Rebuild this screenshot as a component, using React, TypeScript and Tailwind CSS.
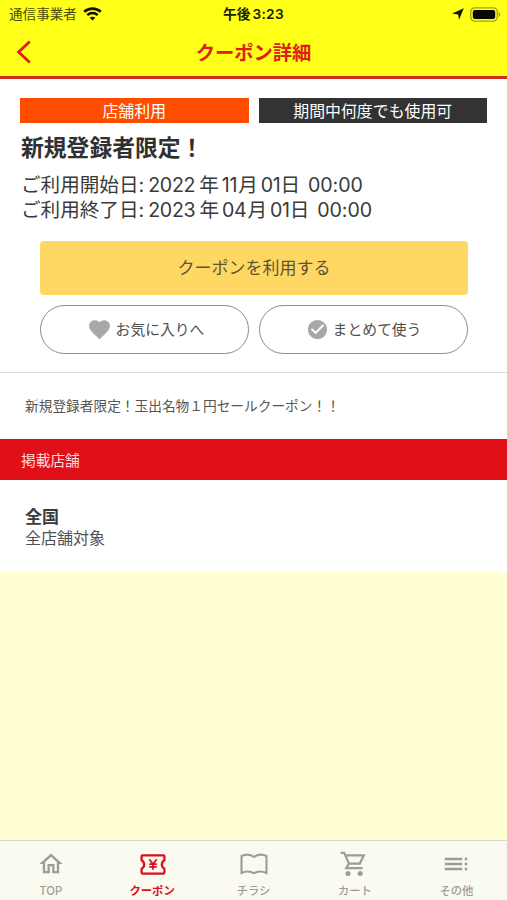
import type { ReactNode } from "react";
import {
  MdCheckCircle,
  MdFavorite,
  MdOutlineHome,
  MdToc,
} from "react-icons/md";

type DateRowProps = {
  label: string;
  year: string;
  month: string;
  day: string;
  time: string;
};

const DateRow = ({ label, year, month, day, time }: DateRowProps) => {
  return (
    <p className="flex h-[25px] items-center whitespace-pre text-[19.6px] leading-[25px] text-[#3a3a3a]">
      <span>{label}:</span>
      <span className="ml-1 tracking-[-0.3px]">{year}</span>
      <span className="ml-[4px] mr-[3px]">年</span>
      <span className="tracking-[-0.3px]">{month}</span>
      <span className="ml-px">月</span>
      <span className="ml-[3px] tracking-[-0.3px]">{day}</span>
      <span>日</span>
      <span className="ml-[8px] tracking-[-0.1px]">{time}</span>
    </p>
  );
};

type TabProps = {
  label: string;
  icon: ReactNode;
  active?: boolean;
};

const Tab = ({ label, icon, active }: TabProps) => {
  return (
    <div
      className={`flex flex-1 flex-col items-center ${
        active ? "font-bold text-[#d8101c]" : "font-medium text-[#9d9d96]"
      }`}
    >
      <div className="mt-[9px] flex h-7 items-center">{icon}</div>
      <span className="mt-1 text-[11.3px] leading-[18px]">{label}</span>
    </div>
  );
};

const TicketIcon = () => (
  <svg className="ml-px" width="26" height="21" viewBox="0 0 26 21" fill="none" stroke="currentColor">
    <path
      d="M2.6 1.4H23.4Q24.4 1.4 24.4 2.4V6.2C21 8.2 21 12.8 24.4 14.8V18.6Q24.4 19.6 23.4 19.6H2.6Q1.6 19.6 1.6 18.6V14.8C5 12.8 5 8.2 1.6 6.2V2.4Q1.6 1.4 2.6 1.4Z"
      strokeWidth="2.3"
    />
    <path d="M9.3 5.2L13 10.1L16.7 5.2M13 10.1V15.8M9.2 10.1H16.8M9.2 12.9H16.8" strokeWidth="1.8" />
  </svg>
);

const BookIcon = () => (
  <svg width="28" height="22" viewBox="0 0 28 22" fill="none" stroke="currentColor" strokeWidth="2.1">
    <path d="M14 4C10.5 1.2 5.5 1.2 1.5 3V20C5.5 18.2 10.5 18.2 14 20.2C17.5 18.2 22.5 18.2 26.5 20V3C22.5 1.2 17.5 1.2 14 4Z" />
  </svg>
);

const CartIcon = () => (
  <svg className="mr-[3px]" width="26" height="26" viewBox="0 0 26 26" fill="none" stroke="currentColor" strokeWidth="2.2">
    <path d="M0.6 1.8H4.2L9 12.6H19.8L23.8 4.3H5.3M8.8 12.6L6.3 17.2H22.6" />
    <circle cx="8" cy="22.6" r="2.5" fill="currentColor" stroke="none" />
    <circle cx="20.2" cy="22.6" r="2.5" fill="currentColor" stroke="none" />
  </svg>
);

const StatusBar = () => (
  <div className="grid h-7 grid-cols-3 items-center">
    <div className="flex items-center pl-[9px] text-[#4b4b0a]">
      <span className="text-[13.6px]">通信事業者</span>
      <svg className="ml-1.5" width="19" height="14" viewBox="0 0 19 14" fill="none" stroke="#111100">
        <path d="M1.2 4.8C5.8 0.5 13.2 0.5 17.8 4.8" strokeWidth="2.6" />
        <path d="M4.3 8.1C7.3 5.4 11.7 5.4 14.7 8.1" strokeWidth="2.5" />
        <path d="M9.5 13.6L6.7 10.7C8.3 9.3 10.7 9.3 12.3 10.7Z" fill="#111100" stroke="none" />
      </svg>
    </div>
    <p className="text-center text-[13.7px] font-bold text-[#202000]">
      午後<span className="ml-0.5 font-semibold tracking-[0.3px]">3:23</span>
    </p>
    <div className="flex items-center justify-end pr-[6px]">
      <svg width="12" height="12" viewBox="0 0 12 12" fill="#111100">
        <path d="M11.8 0.2L7 11.8L6.2 6.4L0.2 5.6Z" />
      </svg>
      <svg className="ml-[6px]" width="31" height="15" viewBox="0 0 31 15">
        <rect x="0.7" y="0.9" width="26.6" height="13.2" rx="4" fill="none" stroke="#a2a217" strokeWidth="1.3" />
        <rect x="2.8" y="2.9" width="22.4" height="9.2" rx="2" fill="#080800" />
        <path d="M28.6 5V10Q30.4 9.2 30.4 7.5Q30.4 5.8 28.6 5Z" fill="#a2a217" />
      </svg>
    </div>
  </div>
);

export default function App() {
  return (
    <div className="flex h-[900px] w-[507px] flex-col overflow-hidden bg-[#ffffd2] font-['Inter','Noto_Sans_CJK_JP',sans-serif]">
      <header className="h-[79px] shrink-0 border-b-[3px] border-[#d22a1b] bg-[#ffff17]">
        <StatusBar />
        <div className="grid h-12 grid-cols-[60px_1fr_60px] items-center">
          <svg className="ml-4" width="16" height="24" viewBox="0 0 16 24" fill="none" stroke="#dc2113" strokeWidth="2.8">
            <path d="M13.8 1.5L2.6 12L13.8 22.5" />
          </svg>
          <h1 className="pt-0.5 text-center text-[19.3px] font-bold text-[#dc2113]">クーポン詳細</h1>
        </div>
      </header>

      <section className="h-[294px] shrink-0 border-b border-[#dcdcdc] bg-white px-5 pt-[19px]">
        <div className="grid grid-cols-2 gap-[10px] text-center text-[15.9px] leading-[27px] text-white">
          <span className="h-[25px] bg-[#ff4d00]">店舗利用</span>
          <span className="h-[25px] bg-[#333333]">期間中何度でも使用可</span>
        </div>
        <h2 className="mt-[9px] pl-px text-[22.8px] font-bold leading-[32px] text-[#303030]">
          新規登録者限定！
        </h2>
        <div className="mt-[9px] pl-px">
          <DateRow label="ご利用開始日" year="2022" month="11" day="01" time="00:00" />
          <DateRow label="ご利用終了日" year="2023" month="04" day="01" time="00:00" />
        </div>
        <div className="mt-[18px] pl-5 pr-[19px]">
          <button className="block h-[54px] w-full rounded bg-[#ffd863] pt-0.5 text-[17px] text-[#5f5332]">
            クーポンを利用する
          </button>
          <div className="mt-[10px] grid grid-cols-2 gap-[10px] text-[14.8px] text-[#505050]">
            <button className="flex h-[49px] items-center justify-center rounded-full border border-[#8c8c8c] pl-0.5">
              <MdFavorite className="mr-1 size-[25px] text-[#a8a8a8]" />
              <span className="pt-px">お気に入りへ</span>
            </button>
            <button className="flex h-[49px] items-center justify-center rounded-full border border-[#8c8c8c]">
              <MdCheckCircle className="mr-1 size-[23px] text-[#a8a8a8]" />
              <span className="pt-px">まとめて使う</span>
            </button>
          </div>
        </div>
      </section>

      <p className="h-[66px] shrink-0 bg-white pl-[25px] text-[13.7px] leading-[67px] text-[#555555]">
        新規登録者限定！玉出名物１円セールクーポン！！
      </p>
      <h3 className="h-[41px] shrink-0 bg-[#df1018] pl-[21px] text-[14.7px] leading-[44px] text-[#ffdcdc]">
        掲載店舗
      </h3>
      <section className="h-[92px] shrink-0 bg-white pl-[25px] pt-[27px] text-[#3b3b3b]">
        <p className="text-[17px] font-bold leading-[21px]">全国</p>
        <p className="text-[16px] leading-[21px] text-[#505050]">全店舗対象</p>
      </section>

      <nav className="mt-auto flex h-[60px] shrink-0 border-t border-[#d9d9cf] bg-[#fafaf0]">
        <Tab label="TOP" icon={<MdOutlineHome className="size-[28px]" />} />
        <Tab label="クーポン" icon={<TicketIcon />} active />
        <Tab label="チラシ" icon={<BookIcon />} />
        <Tab label="カート" icon={<CartIcon />} />
        <Tab label="その他" icon={<MdToc className="size-[30px]" />} />
      </nav>
    </div>
  );
}
